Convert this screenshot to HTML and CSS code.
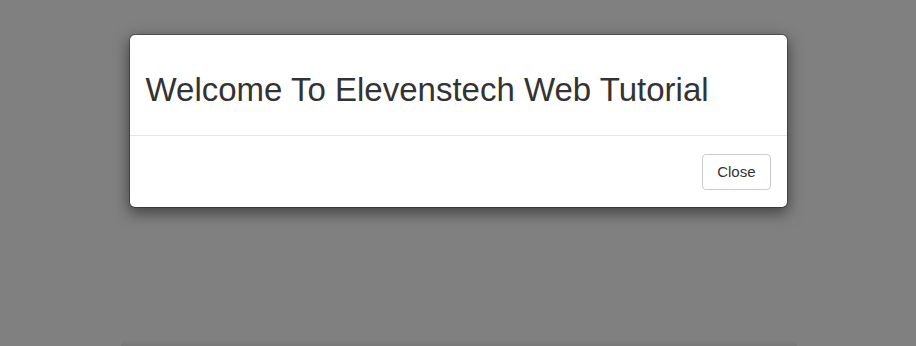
FILE: index.html
```html
<!DOCTYPE html>
<html>
<head>
<meta charset="utf-8">
<link rel="stylesheet" href="styles.css">
</head>
<body>
<div class="backdrop">
  <div class="modal">
    <div class="modal-header">
      <h1 class="modal-title">Welcome To Elevenstech Web Tutorial</h1>
    </div>
    <div class="modal-footer">
      <button class="btn" type="button">Close</button>
    </div>
  </div>
  <div class="ghost"></div>
</div>
</body>
</html>
```
FILE: styles.css
```css
html, body {
  margin: 0;
  padding: 0;
  height: 100%;
  overflow: hidden;
}
body {
  background: #808080;
  font-family: "Liberation Sans", Arial, Helvetica, sans-serif;
  color: #333;
}
.backdrop {
  position: relative;
  height: 100%;
  padding-top: 34px;
  box-sizing: border-box;
}
.modal {
  width: 659px;
  margin: 0 auto;
  background: #fff;
  border: 1px solid rgba(0,0,0,.3);
  border-radius: 6px;
  box-shadow: 0 5px 15px rgba(0,0,0,.5);
  box-sizing: border-box;
  background-clip: padding-box;
}
.modal-header {
  padding: 15px 16px 16px 16px;
  border-bottom: 1px solid #e5e5e5;
}
.modal-title {
  margin: 22px 0 11px;
  font-size: 33px;
  line-height: 36.3px;
  font-weight: 400;
  color: #333;
}
.modal-footer {
  display: flex;
  justify-content: flex-end;
  padding: 18px 16px 17px;
}
.btn {
  font-family: "Liberation Sans", Arial, Helvetica, sans-serif;
  font-size: 15px;
  line-height: 22px;
  padding: 6px 14px;
  color: #333;
  background: #fff;
  border: 1px solid #ccc;
  border-radius: 4px;
}
.ghost {
  position: absolute;
  left: 121px;
  width: 676px;
  bottom: 0;
  height: 6px;
  background: linear-gradient(to bottom, rgba(0,0,0,0), rgba(0,0,0,.07));
  border-radius: 6px 6px 0 0;
}
```
